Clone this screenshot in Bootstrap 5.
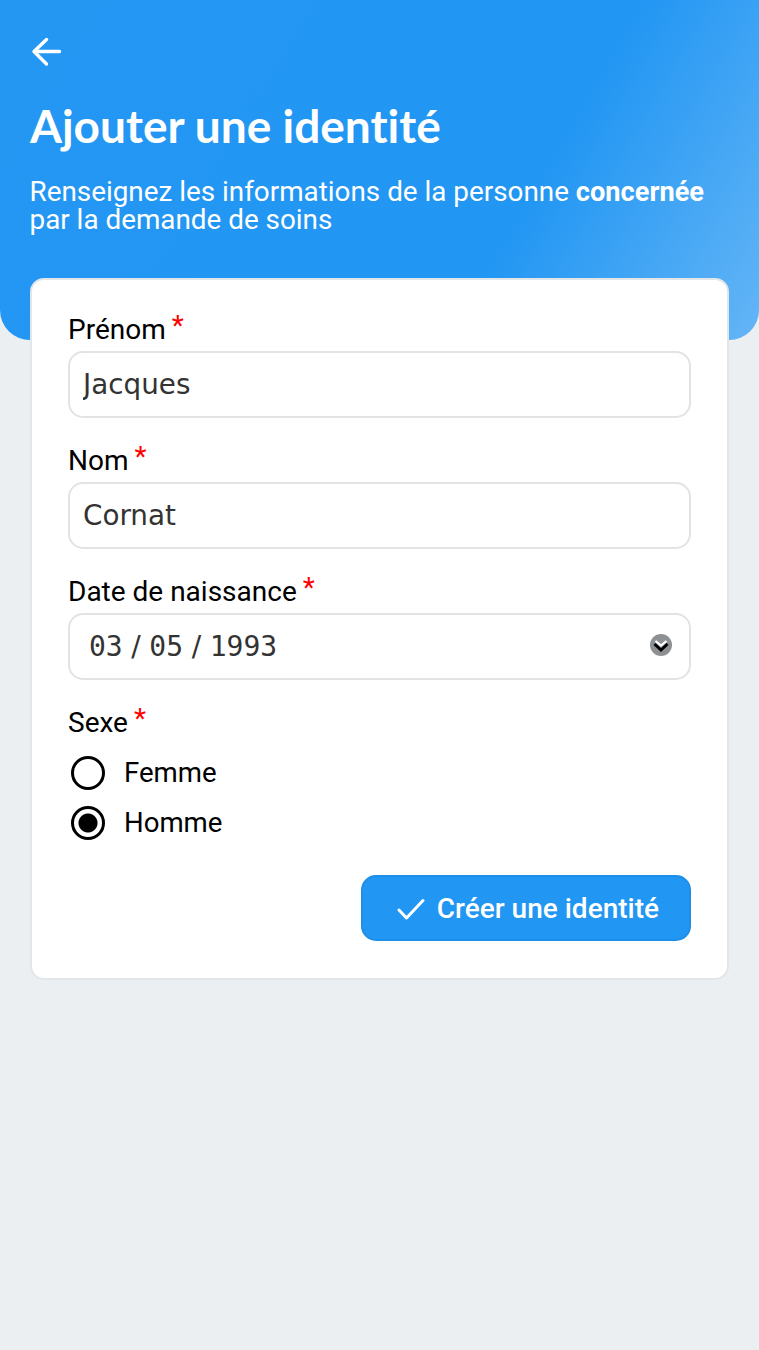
<!DOCTYPE html>
<html lang="fr">
<head>
  <meta charset="UTF-8">
  <meta name="viewport" content="width=device-width, initial-scale=1">
  <title>Ajouter une identité</title>
  <link rel="stylesheet" href="https://cdn.jsdelivr.net/npm/bootstrap@5.3.0/dist/css/bootstrap.min.css">
  <script src="https://cdn.jsdelivr.net/npm/bootstrap@5.3.0/dist/js/bootstrap.bundle.min.js"></script>
  <style>
    body {
      background: #ebeff2;
      font-family: Roboto, sans-serif;
      color: #000;
      min-height: 1350px;
    }

    .hero {
      height: 340px;
      padding: 36px 30px 0;
      color: #fff;
      background: linear-gradient(120deg, #2497f3 0%, #2196f3 67%, #64b5f6 100%);
      border-radius: 0 0 30px 30px;
    }

    .back-btn {
      display: block;
      width: 32px;
      height: 32px;
      color: #fff;
    }

    .hero-title {
      margin: 28px 0 0;
      font-family: Lato, sans-serif;
      font-size: 46px;
      font-weight: 700;
      line-height: 60px;
      font-variant-ligatures: none;
    }

    .hero-sub {
      margin: 22px 0 0 -0.5px;
      font-size: 27.85px;
      line-height: 27px;
    }

    .hero-sub strong {
      font-size: 27.2px;
      font-weight: 700;
    }

    .form-panel {
      margin: -62px 30px 0;
      padding: 31px 36px 37px;
      background: #fff;
      border: 2px solid #e3e6e8;
      border-radius: 14px;
    }

    .field-label {
      display: block;
      margin: 0 0 3px;
      padding-top: 1px;
      font-size: 28px;
      line-height: 36px;
    }

    .req {
      position: relative;
      top: -4px;
      margin-left: -1px;
      color: #f00;
    }

    .field-input.form-control {
      height: 67px;
      padding: 0 13px;
      font-family: "DejaVu Sans", sans-serif;
      font-size: 27.8px;
      color: #333;
      border: 2.5px solid #e3e3e3;
      border-radius: 15px;
      box-shadow: none;
    }

    .date-box {
      height: 67px;
      padding: 0 17px 0 19px;
      font-family: "DejaVu Sans Mono", monospace;
      font-size: 28px;
      color: #333;
      border: 2.5px solid #e3e3e3;
      border-radius: 15px;
    }

    .date-sep {
      margin: 0 8.6px;
      font-family: "DejaVu Sans", sans-serif;
    }

    .date-toggle {
      margin-bottom: 3px;
    }

    .field-gap {
      margin-bottom: 24px;
    }

    .sexe-title {
      margin-bottom: 7px;
    }

    .sexe-option {
      height: 50px;
      padding: 0;
      margin: 0;
      font-size: 27.6px;
    }

    .sexe-option .form-check-input {
      float: none;
      width: 34px;
      height: 34px;
      margin: 0 19px 0 3px;
      border: 3.5px solid #000;
      background-color: #fff;
      box-shadow: none;
    }

    .sexe-option .form-check-input:checked {
      background-image: radial-gradient(circle, #000 0 9px, #fff 10px);
      border-color: #000;
    }

    .sexe-option .form-check-label {
      opacity: 1;
    }

    .submit-btn {
      height: 66px;
      padding: 2px 30px 0 34px;
      margin-top: 27px;
      font-size: 28px;
      font-weight: 500;
      color: #fff;
      background: #2196f3;
      border: 2px solid #1e8fe8;
      border-radius: 15px;
    }
  </style>
</head>
<body>
  <div class="hero">
    <a class="back-btn" href="#" aria-label="Retour">
      <svg width="32" height="32" viewBox="0 0 32 32" fill="none" stroke="currentColor" stroke-width="3.4" stroke-linecap="round" stroke-linejoin="round">
        <path d="M29.5 15.5H4M16.5 3.5 4 15.5l12.5 12.5"/>
      </svg>
    </a>
    <h1 class="hero-title">Ajouter une identité</h1>
    <p class="hero-sub">Renseignez les informations de la personne <strong>concernée</strong> par la demande de soins</p>
  </div>

  <form class="form-panel">
    <div class="field-gap">
      <label class="field-label" for="prenom">Prénom <span class="req">*</span></label>
      <input id="prenom" class="form-control field-input" type="text" value="Jacques">
    </div>
    <div class="field-gap">
      <label class="field-label" for="nom">Nom <span class="req">*</span></label>
      <input id="nom" class="form-control field-input" type="text" value="Cornat">
    </div>
    <div class="field-gap">
      <span class="field-label">Date de naissance <span class="req">*</span></span>
      <div class="date-box d-flex align-items-center">
        <span>03</span><span class="date-sep">/</span><span>05</span><span class="date-sep">/</span><span>1993</span>
        <svg class="date-toggle ms-auto" width="22" height="22" viewBox="0 0 22 22">
          <circle cx="11" cy="11" r="11" fill="#8e9193"/>
          <path d="M5.5 7 11 11.5 16.5 7" fill="none" stroke="#fff" stroke-width="2.2"/>
          <path d="M4.5 10 11 16l6.5-6" fill="none" stroke="#000" stroke-width="3"/>
        </svg>
      </div>
    </div>
    <span class="field-label sexe-title">Sexe <span class="req">*</span></span>
    <div class="form-check sexe-option d-flex align-items-center">
      <input class="form-check-input" type="radio" name="sexe" id="femme">
      <label class="form-check-label" for="femme">Femme</label>
    </div>
    <div class="form-check sexe-option d-flex align-items-center">
      <input class="form-check-input" type="radio" name="sexe" id="homme" checked>
      <label class="form-check-label" for="homme">Homme</label>
    </div>
    <div class="d-flex justify-content-end">
      <button class="btn submit-btn d-flex align-items-center gap-2" type="button">
        <svg class="me-1" width="28" height="22" viewBox="0 0 28 22" fill="none" stroke="currentColor" stroke-width="3" stroke-linecap="round" stroke-linejoin="round"><path d="M2 12 9.5 20 26 2.5"/></svg>
        Créer une identité
      </button>
    </div>
  </form>
</body>
</html>
